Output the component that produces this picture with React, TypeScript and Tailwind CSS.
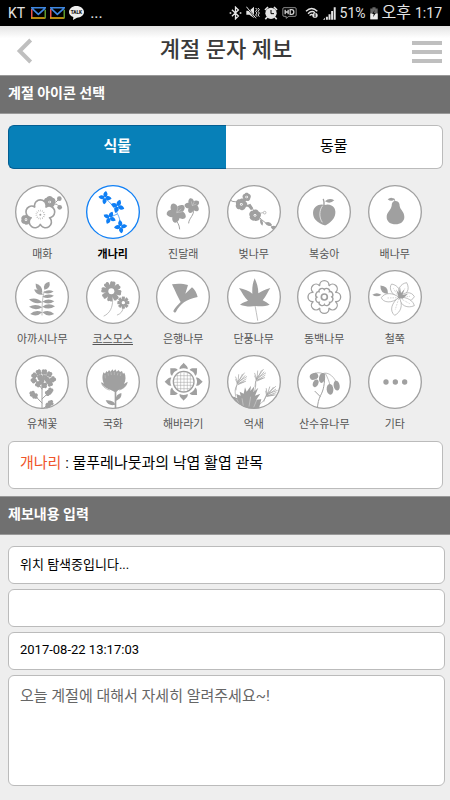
import React, { useState } from 'react';

type IconProps = { children: React.ReactNode };

const GRAY = '#a0a0a0';

const spread = (count: number) => Array.from({ length: count }, (_, i) => (360 / count) * i);

// 꽃잎을 원형으로 배치
const Petals: React.FC<{ x: number; y: number; d: string; count: number; turn?: number; size?: number }> = ({
  x,
  y,
  d,
  count,
  turn = 0,
  size = 1,
}) => (
  <g transform={`translate(${x} ${y}) rotate(${turn}) scale(${size})`}>
    {spread(count).map((angle) => (
      <path key={angle} d={d} transform={`rotate(${angle})`} />
    ))}
  </g>
);

const POINTED = 'M0 0C-10 -7 -7 -15 0 -21C7 -15 10 -7 0 0Z';
const ROUND = 'M-3 0C-13 -6 -10 -17 0 -17C10 -17 13 -6 3 0Z';
const BLUNT = 'M-6 -6L-8 -24C-9 -30 -3 -32 0 -29C3 -32 9 -30 8 -24L6 -6Z';
const WIDE = 'M-4 0C-14 -9 -15 -22 -3 -30C8 -32 16 -15 4 0Z';

const SmallBlossom: React.FC<{ x: number; y: number; size: number; turn?: number }> = ({ x, y, size, turn }) => (
  <g>
    <Petals x={x} y={y} d={ROUND} count={5} size={size} turn={turn} />
    <circle cx={x} cy={y} r={4} fill="#fff" />
    <circle cx={x} cy={y} r={2} />
  </g>
);

// 겹잎 모양의 외곽선
const Scallop: React.FC<{ r: number; lobe: number; count: number; width: number; cx?: number; cy?: number; turn?: number }> = ({
  r,
  lobe,
  count,
  width,
  cx = 82,
  cy = 81,
  turn = 0,
}) => (
  <g transform={`translate(${cx} ${cy}) rotate(${turn})`}>
    {spread(count).map((a) => (
      <circle key={a} cx={0} cy={-r} r={lobe} transform={`rotate(${a})`} />
    ))}
    <g fill="#fff">
      {spread(count).map((a) => (
        <circle key={a} cx={0} cy={-r} r={lobe - width} transform={`rotate(${a})`} />
      ))}
      <circle r={r} />
    </g>
  </g>
);

const Leaf: React.FC<{ x: number; y: number; length: number; width: number; turn: number }> = ({
  x,
  y,
  length,
  width,
  turn,
}) => (
  <path
    d={`M0 0Q${length * 0.5} ${-width} ${length} 0Q${length * 0.5} ${width} 0 0Z`}
    transform={`translate(${x} ${y}) rotate(${turn})`}
  />
);

const Line: React.FC<{ d: string; w?: number }> = ({ d, w = 2 }) => (
  <path d={d} fill="none" stroke="currentColor" strokeWidth={w} strokeLinecap="round" />
);

const plumIcon = (
  <>
    <Line d="M112 56L126 58L134 66M122 52L133 41" w={3} />
    <circle cx={133} cy={41} r={7} />
    <circle cx={134} cy={67} r={7} />
    <SmallBlossom x={104} y={51} size={1.05} />
    <SmallBlossom x={33} y={104} size={0.9} turn={20} />
    <Scallop r={27} lobe={20} count={5} width={5} cx={76} cy={89} />
    <circle cx={76} cy={89} r={12} fill="none" stroke="currentColor" strokeWidth={5} strokeDasharray="1.5 4" />
    <circle cx={76} cy={89} r={3} />
  </>
);

const forsythiaIcon = (
  <>
    <Line d="M58 40C76 54 90 74 98 94C102 104 103 112 104 124M71 97L92 88" />
    <Petals x={57} y={38} d={POINTED} count={4} turn={8} size={0.95} />
    <Petals x={95} y={64} d={POINTED} count={4} turn={20} />
    <Petals x={71} y={98} d={POINTED} count={4} turn={25} size={0.95} />
    <Petals x={104} y={125} d={POINTED} count={4} turn={-8} size={0.95} />
    <g fill="#fff">
      <circle cx={57} cy={38} r={2} />
      <circle cx={95} cy={64} r={2} />
      <circle cx={71} cy={98} r={2} />
      <circle cx={104} cy={125} r={2} />
    </g>
  </>
);

const azaleaIcon = (
  <>
    <Line d="M58 104C64 112 70 118 71 132M112 76C116 90 98 100 98 114" w={3} />
    <Petals x={62} y={83} d={WIDE} count={5} turn={-24} />
    <Petals x={109} y={62} d={WIDE} count={5} turn={-14} size={0.77} />
    <circle cx={62} cy={83} r={14} />
    <circle cx={109} cy={62} r={11} />
    <path
      d="M62 83L66 66M62 83L76 72M62 83L80 80M109 62L106 49M109 62L115 50M109 62L121 57"
      fill="none"
      stroke="#d6d6d6"
      strokeWidth={1.5}
    />
  </>
);

const cherryIcon = (
  <>
    <Line d="M10 44C16 54 25 47 36 52" w={3} />
    <Line d="M58 62C72 60 76 72 86 84C97 98 110 112 126 119L148 132" w={3} />
    <Line d="M88 87L108 83M98 101L106 116" w={2} />
    <path d="M55 62L70 56L79 70L72 76L65 67Z" />
    <circle cx={113} cy={83} r={4} fill="#fff" stroke="currentColor" strokeWidth={2} />
    <SmallBlossom x={43} y={58} size={1.05} turn={20} />
    <SmallBlossom x={59} y={36} size={0.75} />
    <SmallBlossom x={84} y={91} size={1.05} turn={8} />
    <Leaf x={101} y={103} length={20} width={8} turn={75} />
    <Leaf x={114} y={114} length={22} width={12} turn={15} />
    <Leaf x={131} y={126} length={22} width={13} turn={15} />
  </>
);

const peachIcon = (
  <>
    <Line d="M81 62C82 53 81 48 79 43" w={4} />
    <Leaf x={84} y={49} length={28} width={11} turn={-6} />
    <path d="M83 60C94 56 106 60 112 69C119 82 114 100 101 110C94 116 88 121 82 121C75 119 62 113 54 103C46 90 46 73 56 65C64 58 75 57 83 60Z" />
    <path d="M77 62C67 74 65 97 76 112" fill="none" stroke="#fff" strokeWidth={2} />
  </>
);

const pearIcon = (
  <>
    <Line d="M80 49C80 45 80 43 78 41" w={3} />
    <Leaf x={80} y={43} length={21} width={9} turn={180} />
    <path d="M82 48C91 47 95 54 95 63C97 75 109 80 109 96C109 110 97 118 83 118C67 118 56 110 56 96C56 81 69 76 71 62C71 53 75 48 82 48Z" />
  </>
);

const acaciaIcon = (
  <>
    <Line d="M81 135C81 104 82 84 88 64" w={2} />
    <Leaf x={88} y={59} length={28} width={15} turn={-57} />
    <Leaf x={82} y={68} length={34} width={14} turn={-126} />
    <Leaf x={84} y={74} length={31} width={12} turn={-150} />
    <Leaf x={85} y={67} length={31} width={10} turn={-5} />
    <Leaf x={82} y={80} length={35} width={11} turn={-4} />
    <Leaf x={82} y={95} length={36} width={12} turn={-2} />
    <Leaf x={82} y={110} length={38} width={13} turn={-2} />
    <Leaf x={82} y={127} length={36} width={13} turn={8} />
    <Leaf x={82} y={97} length={41} width={13} turn={193} />
    <Leaf x={82} y={112} length={40} width={13} turn={182} />
    <Leaf x={82} y={127} length={37} width={13} turn={172} />
  </>
);

const cosmosIcon = (
  <>
    <Line d="M80 90C80 112 72 130 54 138M112 112C111 124 103 132 94 135" w={2} />
    <Petals x={76} y={64} d={BLUNT} count={8} turn={10} />
    <Petals x={112} y={98} d={BLUNT} count={8} size={0.6} />
    <circle cx={76} cy={64} r={9} fill="#fff" />
    <circle cx={112} cy={98} r={5} fill="#fff" />
  </>
);

const ginkgoIcon = (
  <path d="M48 43C62 40 80 40 96 45L88 71L108 52C116 58 122 69 125 81C108 85 93 90 84 97C76 103 66 114 60 125C57 130 50 127 53 121C58 111 68 103 74 96C67 84 57 62 48 43Z" />
);

const mapleIcon = (
  <>
    <path d="M83 25C90 40 94 53 94 70C104 63 117 57 130 54C123 64 117 80 107 91C115 95 122 99 128 104C116 109 99 110 86 108C72 110 55 110 39 104C47 97 56 95 63 92C52 82 46 69 36 54C52 57 67 63 76 71C75 53 77 40 83 25Z" />
    <Line d="M84 106C87 120 89 135 92 151" w={2} />
  </>
);

const camelliaIcon = (
  <>
    <Scallop r={35} lobe={16} count={8} width={4} />
    <Scallop r={18} lobe={11} count={8} width={4} turn={22} />
    <circle cx={82} cy={81} r={9} fill="none" stroke="currentColor" strokeWidth={5} />
  </>
);

const royalAzaleaIcon = (
  <>
    <Leaf x={60} y={72} length={34} width={17} turn={-132} />
    <Leaf x={40} y={74} length={27} width={9} turn={180} />
    <g fill="#fff" stroke="currentColor" strokeWidth={2}>
      <path d="M93 82C68 74 62 52 71 42C90 46 102 62 93 82Z" />
      <path d="M93 82C72 102 45 98 40 83C51 66 75 68 93 82Z" />
      <path d="M93 82C86 57 98 41 116 38C127 58 117 75 93 82Z" />
      <path d="M93 82C106 66 130 62 139 80C130 98 107 96 93 82Z" />
      <path d="M93 82C118 80 136 93 139 107C119 116 97 108 93 82Z" />
      <path d="M93 82C107 105 98 127 80 136C63 122 71 98 93 82Z" />
    </g>
    <path
      d="M93 83L76 55M93 83L110 56M93 83L125 79M93 83L125 101M93 83L82 118M93 83L57 84"
      fill="none"
      stroke="currentColor"
      strokeWidth={2}
      strokeDasharray="2 3"
    />
    <path d="M93 84L84 58L92 69L96 51L99 69L110 58L103 75L120 71L104 86Z" />
  </>
);

const rapeSpots = [
  [58, 62], [71, 52], [88, 51], [103, 58], [114, 73], [105, 86], [88, 91], [69, 88], [56, 76], [75, 67], [89, 68],
  [79, 79], [98, 75], [52, 116], [60, 123], [106, 107], [99, 114], [107, 144], [99, 152],
];

const rapeIcon = (
  <>
    <Line d="M81 161L81 72M81 144L58 120M81 132L104 110M81 102L60 72M81 100L108 74M84 161L104 147" w={3} />
    {rapeSpots.map(([x, y], i) => (
      <Petals key={i} x={x} y={y} d={ROUND} count={4} turn={i * 23} size={0.55} />
    ))}
  </>
);

const mumIcon = (
  <>
    <Line d="M47 84C48 94 58 101 70 105M123 84C121 94 112 101 101 105" w={2} />
    <path d="M79 107C62 101 49 94 46 82C49 84 52 85 54 86C48 75 48 60 53 52L57 56L61 48L65 52L69 45L74 50L79 43L83 49L88 43L92 50L98 45L102 51L108 48L111 56L115 53C120 62 120 76 114 87L125 80C122 93 112 102 97 105L91 111L91 161L86 161L86 111Z" />
    <path
      d="M58 70L57 60M67 62L66 54M76 60L75 52M85 60L85 51M94 61L96 53M103 63L105 55"
      stroke="#e0e0e0"
      strokeWidth={1}
    />
    <path d="M88 149C75 153 65 149 59 136C75 136 84 139 88 149Z" />
    <path d="M88 138C88 124 95 117 106 114C108 128 99 134 88 138Z" />
  </>
);

const sunflowerIcon = (
  <>
    <Petals x={83} y={80} d="M-12 -37C-14 -46 -6 -49 0 -57C6 -49 14 -46 12 -37Q0 -43 -12 -37Z" count={8} />
    <circle cx={83} cy={80} r={31} fill="#fff" stroke="currentColor" strokeWidth={4} />
    <path
      d="M64 58V102M74 52V108M84 51V109M94 52V108M103 59V102M60 62H106M55 72H111M54 82H112M56 91H110M63 101H103"
      stroke="currentColor"
      strokeWidth={1.5}
    />
  </>
);

const plume = (
  <>
    <Line d="M-6 31C-5 19 -3 10 1 2M0 12L-7 -8M0 10L2 -15M1 8L13 -16M1 10L21 -12M2 12L24 -2M0 15L18 7M-1 14L-7 0" w={2} />
    <Line d="M5 4L26 -9M4 1L19 -20M4 11L23 5" w={2} />
  </>
);

const silverGrassIcon = (
  <>
    <path d="M5 126C14 122 25 125 31 130L28 117L41 122L38 110L50 116L54 97L59 110L72 92L70 108L82 94L79 112L94 98L84 122L100 116L88 134C94 134 99 132 103 133L94 168L20 164Z" />
    <g stroke="#fff" strokeWidth={1}>
      <path d="M36 146L29 132M49 153L45 130M66 155L71 125M80 157L90 133" />
    </g>
    <Line d="M26 124C23 108 24 101 29 92M78 119C86 104 87 92 86 80M94 151C107 143 113 134 118 122" w={2} />
    <g transform="translate(33 74)">{plume}</g>
    <g transform="translate(90 63)">{plume}</g>
    <g transform="translate(123 110) rotate(12)">{plume}</g>
  </>
);

const cornelIcon = (
  <>
    <Line d="M61 162C62 145 65 132 71 121C80 104 83 88 83 57M69 124L54 109" w={3} />
    <Line d="M77 56C91 49 108 62 116 78M86 57C93 70 96 79 98 87M83 58C69 51 56 52 48 58" w={2} />
    <ellipse cx={51} cy={64} rx={13} ry={10} transform="rotate(-18 51 64)" />
    <ellipse cx={75} cy={69} rx={9} ry={15} transform="rotate(10 75 69)" />
    <ellipse cx={56} cy={85} rx={8} ry={12} transform="rotate(22 56 85)" />
    <ellipse cx={99} cy={103} rx={10} ry={16} transform="rotate(-5 99 103)" />
    <ellipse cx={119} cy={92} rx={9} ry={15} transform="rotate(-10 119 92)" />
  </>
);

const moreIcon = (
  <>
    <circle cx={54} cy={81} r={8} />
    <circle cx={82} cy={81} r={8} />
    <circle cx={110} cy={81} r={8} />
  </>
);

const plants = [
  { name: '매화', icon: plumIcon },
  { name: '개나리', icon: forsythiaIcon },
  { name: '진달래', icon: azaleaIcon },
  { name: '벚나무', icon: cherryIcon },
  { name: '복숭아', icon: peachIcon },
  { name: '배나무', icon: pearIcon },
  { name: '아까시나무', icon: acaciaIcon },
  { name: '코스모스', icon: cosmosIcon, underline: true },
  { name: '은행나무', icon: ginkgoIcon },
  { name: '단풍나무', icon: mapleIcon },
  { name: '동백나무', icon: camelliaIcon },
  { name: '철쭉', icon: royalAzaleaIcon },
  { name: '유채꽃', icon: rapeIcon },
  { name: '국화', icon: mumIcon },
  { name: '해바라기', icon: sunflowerIcon },
  { name: '억새', icon: silverGrassIcon },
  { name: '산수유나무', icon: cornelIcon },
  { name: '기타', icon: moreIcon },
];

const CircleIcon: React.FC<IconProps & { active: boolean }> = ({ children, active }) => (
  <svg
    viewBox="0 0 162 162"
    className={`size-[54px] ${active ? 'text-[#0f7ff5]' : 'text-[#a0a0a0]'}`}
    fill="currentColor"
  >
    <clipPath id="disc">
      <circle cx={81} cy={81} r={80} />
    </clipPath>
    <circle cx={81} cy={81} r={79} fill="#fff" />
    <g clipPath="url(#disc)">{children}</g>
    <circle cx={81} cy={81} r={79} fill="none" stroke={active ? 'currentColor' : GRAY} strokeWidth={4} />
  </svg>
);

const MailIcon: React.FC = () => (
  <svg viewBox="0 0 45 36" className="h-3 w-[15px]" fill="none" strokeWidth={5}>
    <path d="M2 6V34" stroke="#e8504a" />
    <path d="M0 33H43" stroke="#d9a514" />
    <path d="M43 34V8" stroke="#5d9a2c" />
    <path d="M0 2H45M3 4L22 22L42 4" stroke="#3f87e0" />
  </svg>
);

const StatusBar: React.FC = () => (
  <div className="flex h-[26px] items-center justify-between bg-black px-2 text-sm text-[#e4e4e4]">
    <div className="flex items-center gap-1">
      <span className="mr-0.5">KT</span>
      <MailIcon />
      <MailIcon />
      <svg viewBox="0 0 45 42" className="h-3.5 w-[15px]">
        <path d="M22 0C35 0 45 8 45 18S35 35 24 35L12 42L13 33C5 31 0 25 0 18C0 8 10 0 22 0Z" fill="#eee" />
        <text x="22" y="23" textAnchor="middle" fontSize="14" fontWeight="900" fill="#222" fontFamily="Roboto">
          TALK
        </text>
      </svg>
      <span className="ml-0.5 text-base">...</span>
    </div>
    <div className="flex items-center gap-1">
      <svg viewBox="0 0 40 42" className="h-3.5 w-[13px]" fill="none" stroke="#e4e4e4" strokeWidth={4}>
        <path d="M9 11L29 30L20 39V3L29 12L9 31M2 21H7M33 21H38" />
      </svg>
      <svg viewBox="0 0 42 42" className="size-3.5" fill="#e4e4e4">
        <path d="M1 14H10L24 2V36L10 26H1Z" />
        <path d="M2 3L30 38" stroke="#000" strokeWidth={5} />
        <path d="M1 2L30 37M29 6L33 11L29 16L33 21L29 27L33 32M36 6L40 11L36 16L40 21L36 27L40 32" fill="none" stroke="#e4e4e4" strokeWidth={3} />
      </svg>
      <svg viewBox="0 0 42 42" className="size-3.5" fill="#e4e4e4">
        <circle cx={21} cy={22} r={17} />
        <path d="M3 12L12 3M30 3L39 12M9 34L4 40M33 34L38 40" stroke="#e4e4e4" strokeWidth={5} />
        <path d="M21 12V23H30" fill="none" stroke="#000" strokeWidth={3} />
      </svg>
      <svg viewBox="0 0 44 36" className="h-3 w-[15px]" fill="none" stroke="#cfcfcf" strokeWidth={2}>
        <path d="M5 2H39Q42 2 42 6V24Q42 28 39 28H20L12 34V28H5Q2 28 2 24V6Q2 2 5 2Z" />
        <path d="M9 8V22M18 8V22M9 15H18M24 8V22H29Q35 22 35 15T29 8Z" strokeWidth={4} />
      </svg>
      <svg viewBox="0 0 42 36" className="ml-1 h-3 w-3.5" fill="none" stroke="#e4e4e4" strokeWidth={4}>
        <path d="M3 13Q20 -4 37 13M9 20Q20 9 30 17M14 26Q19 20 23 24" />
        <circle cx={30} cy={25} r={8} fill="#e4e4e4" stroke="none" />
        <path d="M30 19V31" stroke="#000" strokeWidth={3} />
      </svg>
      <svg viewBox="0 0 40 40" className="size-[13px]" fill="#e4e4e4">
        <path d="M0 39L6 33V39ZM9 30H15V39H9ZM17 22H23V39H17ZM25 12H31V39H25ZM33 1H39V39H33Z" />
      </svg>
      <span>51%</span>
      <svg viewBox="0 0 26 40" className="h-[13px] w-2">
        <path d="M8 0H18V4H25V39H1V4H8Z" fill="#666" />
        <path d="M1 20H25V39H1Z" fill="#eee" />
        <path d="M15 9L7 22H12L10 32L19 18H13Z" fill="#111" />
      </svg>
      <span className="text-base">오후</span>
      <span>1:17</span>
    </div>
  </div>
);

const SectionTitle: React.FC<IconProps> = ({ children }) => (
  <h2 className="h-[39px] border-y border-[#999] bg-[#707070] px-2 pt-[7px] text-sm leading-5 font-bold text-white">
    {children}
  </h2>
);

const App: React.FC = () => {
  const [tab, setTab] = useState('식물');
  const [selected, setSelected] = useState('개나리');
  const field = 'block w-full rounded-md border border-[#bbb] bg-white px-[11px] text-black outline-none';

  return (
    <div className="min-h-screen bg-[#eee] font-[Roboto,'Noto_Sans_CJK_KR',sans-serif]">
      <StatusBar />
      <header className="flex h-[49px] items-center justify-between bg-linear-to-b from-[#e4e4e4] to-white to-25% pr-2 pl-4">
        <button type="button" aria-label="뒤로" className="w-6">
          <svg viewBox="0 0 51 78" className="h-[26px] w-[17px]">
            <path d="M44 6L11 39L44 72" fill="none" stroke="#bfbfbf" strokeWidth={12} />
          </svg>
        </button>
        <h1 className="pb-0.5 text-[22px] leading-8 font-medium text-[#3a3a3a]">계절 문자 제보</h1>
        <button type="button" aria-label="메뉴" className="flex w-[30px] flex-col gap-[5px] pt-0.5">
          <span className="h-1 w-full bg-[#bfbfbf]" />
          <span className="h-1 w-full bg-[#bfbfbf]" />
          <span className="h-1 w-full bg-[#bfbfbf]" />
        </button>
      </header>

      <SectionTitle>계절 아이콘 선택</SectionTitle>
      <div className="mt-[11px] mr-[7px] ml-2 flex h-11">
        {['식물', '동물'].map((name) => (
          <button
            key={name}
            type="button"
            aria-pressed={tab === name}
            onClick={() => setTab(name)}
            className={`flex-1 border pb-0.5 text-[15px] first:rounded-l-md first:border-r-0 last:rounded-r-md last:border-l-0 ${
              tab === name ? 'border-[#045e92] bg-[#0780b8] font-bold text-white' : 'border-[#bbb] bg-white text-black'
            }`}
          >
            {name}
          </button>
        ))}
      </div>

      <div className="mt-4 grid grid-cols-6 gap-y-[5px] pr-5 pl-[7px]">
        {plants.map((plant) => (
          <button
            key={plant.name}
            type="button"
            aria-pressed={selected === plant.name}
            onClick={() => setSelected(plant.name)}
            className="flex flex-col items-center gap-1.5"
          >
            <CircleIcon active={selected === plant.name}>{plant.icon}</CircleIcon>
            <span
              className={`text-[11px] leading-5 whitespace-nowrap ${
                selected === plant.name ? 'font-bold text-black' : 'text-[#555]'
              } ${plant.underline ? 'underline underline-offset-1' : ''}`}
            >
              {plant.name}
            </span>
          </button>
        ))}
      </div>

      <p className="mt-1.5 mr-[7px] mb-[7px] ml-2 h-12 rounded-md border border-[#bbb] bg-white px-[11px] pt-[11px] text-[15px] leading-5 text-black">
        <span className="text-[#f0552b]">개나리</span> : 물푸레나뭇과의 낙엽 활엽 관목
      </p>

      <SectionTitle>제보내용 입력</SectionTitle>
      <form className="flex flex-col gap-[5px] pt-[11px] pr-[5px] pb-3 pl-2">
        <input aria-label="위치" defaultValue="위치 탐색중입니다..." className={`${field} h-[38px] pb-1 text-[13px]`} />
        <input aria-label="상세 위치" className={`${field} h-[38px] pb-1 text-[13px]`} />
        <input aria-label="날짜" defaultValue="2017-08-22 13:17:03" className={`${field} h-[38px] pb-1 text-[13px]`} />
        <textarea
          aria-label="제보내용"
          placeholder="오늘 계절에 대해서 자세히 알려주세요~!"
          className={`${field} h-[111px] resize-none py-2 text-[15px] leading-6 placeholder:text-[#666]`}
        />
      </form>
    </div>
  );
};

export default App;
